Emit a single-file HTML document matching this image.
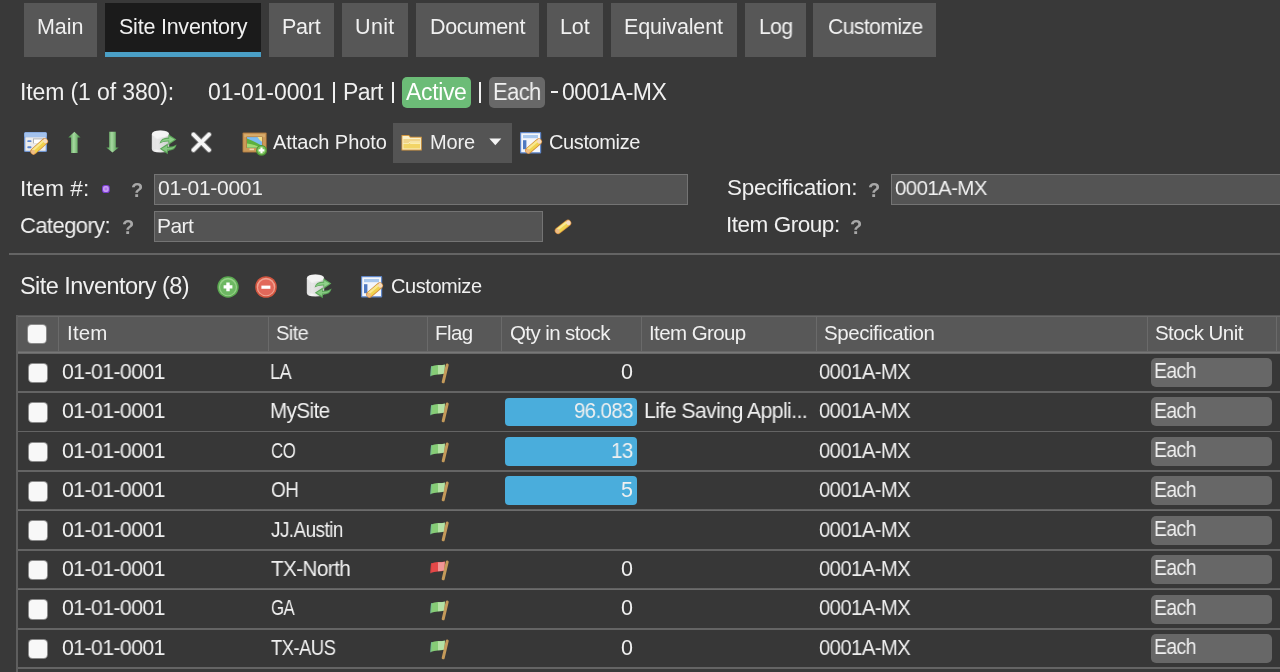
<!DOCTYPE html>
<html><head><meta charset="utf-8"><style>
html,body{margin:0;padding:0;width:1280px;height:672px;overflow:hidden;background:#393939;}
body{position:relative;font-family:"Liberation Sans",sans-serif;}
body>div,body>span,body>svg{position:absolute;}
.t{white-space:pre;line-height:1;display:block;will-change:transform;}
.b{display:inline-block;width:0;height:0;}
</style></head><body>
<div style="left:24.00px;top:3.00px;width:73.00px;height:54.00px;background:#575757"></div>
<span class="t" id="t0" style="left:37.09px;top:17.07px;font-size:21.5px;letter-spacing:-0.080px;color:#f0f0f0;">Main<i class="b"></i></span>
<div style="left:105.00px;top:3.00px;width:156.00px;height:54.00px;background:#1b1b1b"></div>
<div style="left:105.00px;top:52.00px;width:156.00px;height:5.00px;background:#4a9fc6"></div>
<span class="t" id="t1" style="left:118.52px;top:17.07px;font-size:21.5px;letter-spacing:-0.226px;color:#f0f0f0;">Site Inventory<i class="b"></i></span>
<div style="left:268.75px;top:3.00px;width:65.45px;height:54.00px;background:#575757"></div>
<span class="t" id="t2" style="left:281.64px;top:17.07px;font-size:21.5px;letter-spacing:-0.237px;color:#f0f0f0;">Part<i class="b"></i></span>
<div style="left:341.60px;top:3.00px;width:66.80px;height:54.00px;background:#575757"></div>
<span class="t" id="t3" style="left:355.24px;top:17.07px;font-size:21.5px;letter-spacing:0.361px;color:#f0f0f0;">Unit<i class="b"></i></span>
<div style="left:416.25px;top:3.00px;width:122.85px;height:54.00px;background:#575757"></div>
<span class="t" id="t4" style="left:429.74px;top:17.07px;font-size:21.5px;letter-spacing:-0.367px;color:#f0f0f0;">Document<i class="b"></i></span>
<div style="left:547.20px;top:3.00px;width:55.80px;height:54.00px;background:#575757"></div>
<span class="t" id="t5" style="left:559.84px;top:17.07px;font-size:21.5px;letter-spacing:-0.083px;color:#f0f0f0;">Lot<i class="b"></i></span>
<div style="left:611.00px;top:3.00px;width:126.10px;height:54.00px;background:#575757"></div>
<span class="t" id="t6" style="left:624.24px;top:17.07px;font-size:21.5px;letter-spacing:-0.165px;color:#f0f0f0;">Equivalent<i class="b"></i></span>
<div style="left:744.70px;top:3.00px;width:60.90px;height:54.00px;background:#575757"></div>
<span class="t" id="t7" style="left:758.57px;top:17.07px;font-size:21.5px;letter-spacing:-0.600px;color:#f0f0f0;transform:scaleX(0.9834);transform-origin:0 0;">Log<i class="b"></i></span>
<div style="left:812.70px;top:3.00px;width:123.30px;height:54.00px;background:#575757"></div>
<span class="t" id="t8" style="left:827.68px;top:17.07px;font-size:21.5px;letter-spacing:-0.600px;color:#f0f0f0;transform:scaleX(0.9840);transform-origin:0 0;">Customize<i class="b"></i></span>
<span class="t" id="t9" style="left:20.48px;top:80.60px;font-size:23px;letter-spacing:-0.116px;color:#f0f0f0;">Item (1 of 380):<i class="b"></i></span>
<span class="t" id="t10" style="left:207.70px;top:80.60px;font-size:23px;letter-spacing:-0.092px;color:#f0f0f0;">01-01-0001<i class="b"></i></span>
<div style="left:332.80px;top:81.50px;width:2.40px;height:21.00px;background:#f0f0f0"></div>
<span class="t" id="t11" style="left:342.61px;top:80.60px;font-size:23px;letter-spacing:-0.600px;color:#f0f0f0;">Part<i class="b"></i></span>
<div style="left:391.90px;top:81.50px;width:2.40px;height:21.00px;background:#f0f0f0"></div>
<div style="left:401.70px;top:77.00px;width:69.60px;height:30.60px;background:#6cbc77;border-radius:5px"></div>
<span class="t" id="t12" style="left:406.16px;top:80.81px;font-size:23px;letter-spacing:-0.353px;color:#ffffff;">Active<i class="b"></i></span>
<div style="left:479.00px;top:81.50px;width:2.40px;height:21.00px;background:#f0f0f0"></div>
<div style="left:489.00px;top:77.00px;width:56.00px;height:30.60px;background:#686868;border-radius:5px"></div>
<span class="t" id="t13" style="left:493.10px;top:80.81px;font-size:23px;letter-spacing:-0.600px;color:#f0f0f0;transform:scaleX(0.9546);transform-origin:0 0;">Each<i class="b"></i></span>
<div style="left:550.90px;top:91.00px;width:7.00px;height:2.20px;background:#f0f0f0"></div>
<span class="t" id="t14" style="left:562.10px;top:80.60px;font-size:23px;letter-spacing:-0.555px;color:#f0f0f0;">0001A-MX<i class="b"></i></span>
<div style="left:393.00px;top:123.00px;width:119.00px;height:40.00px;background:#545454"></div>
<span class="t" id="t15" style="left:272.96px;top:131.76px;font-size:20px;letter-spacing:-0.058px;color:#f0f0f0;">Attach Photo<i class="b"></i></span>
<svg style="left:23px;top:130px;" width="27" height="27" viewBox="0 0 27 27"><rect x="1" y="2" width="23" height="20" rx="1.5" fill="#6f95d2"/><rect x="1.5" y="2.5" width="22" height="4.5" rx="1" fill="#a4c2ec"/><rect x="2.3" y="7.2" width="20.4" height="13.6" fill="#ececec"/><rect x="4.3" y="10.2" width="4.2" height="1.9" rx="0.9" fill="#5b84cf"/><rect x="4.3" y="16.3" width="4.2" height="1.9" rx="0.9" fill="#5b84cf"/><rect x="10" y="8.4" width="12.5" height="5" fill="#b4b4b4"/><rect x="11" y="9.4" width="11.5" height="4" fill="#ffffff"/><g transform="translate(8.20,23.60) rotate(-41.99)"><rect x="0" y="-3.30" width="21.53" height="6.60" rx="3.30" fill="#d28c3c"/><rect x="2.97" y="-2.50" width="14.60" height="5.00" fill="#f0d24e"/><rect x="2.97" y="-2.40" width="14.60" height="2.10" fill="#f8e890"/><ellipse cx="2.51" cy="0" rx="1.98" ry="2.31" fill="#eebc84"/><ellipse cx="18.89" cy="0" rx="2.11" ry="2.47" fill="#f6dcc0"/></g></svg>
<svg style="left:68.4px;top:131.2px;" width="14" height="23" viewBox="0 0 14 23"><defs><linearGradient id="ga" x1="0" x2="1"><stop offset="0" stop-color="#3f8f3f"/><stop offset="0.45" stop-color="#a6d8a0"/><stop offset="1" stop-color="#3f8f3f"/></linearGradient></defs><polygon points="6.4,0.8 12.6,6.4 9.6,6.4 9.6,22 3.1,22 3.1,6.4 0.2,6.4" fill="url(#ga)"/></svg>
<svg style="left:105.5px;top:131.3px;" width="14" height="23" viewBox="0 0 14 23"><defs><linearGradient id="gd" x1="0" x2="1"><stop offset="0" stop-color="#3f8f3f"/><stop offset="0.45" stop-color="#a6d8a0"/><stop offset="1" stop-color="#3f8f3f"/></linearGradient></defs><polygon points="3.2,0.7 9.8,0.7 9.8,16.6 12.8,16.6 6.5,21.6 0.2,16.6 3.2,16.6" fill="url(#gd)"/></svg>
<svg style="left:151.2px;top:129.6px;" width="27" height="26" viewBox="0 0 27 26"><defs><linearGradient id="gc" x1="0" x2="1"><stop offset="0" stop-color="#dcdcdc"/><stop offset="0.3" stop-color="#f6f6f6"/><stop offset="1" stop-color="#c8c8c8"/></linearGradient></defs><path d="M0.8,4.5 Q0.8,0.6 9.5,0.6 Q18.2,0.6 18.2,4.5 L18.2,19 Q18.2,22.5 9.5,22.5 Q0.8,22.5 0.8,19 Z" fill="url(#gc)"/><ellipse cx="9.5" cy="4.2" rx="8.4" ry="3.4" fill="#f4f4f4"/><path d="M3.5,8 Q9.5,10 15.5,8 L15.5,19 Q9.5,21 3.5,19 Z" fill="#d8d8d8" opacity="0.5"/><path d="M8.6,13.6 Q9.6,7.6 17.4,7.6 L17.4,4.2 L25.4,9.6 L17.4,15 L17.4,11.6 Q12,11.4 8.6,13.6 Z" fill="#5fa85c"/><path d="M9.8,12.2 Q11.5,8.8 18.2,8.8 L18.2,6.4 L23.6,9.6 L18.2,13 L18.2,10.6 Q13,10.4 9.8,12.2 Z" fill="#8fd08a"/><path d="M25.6,14.6 Q24.6,20.8 16.8,20.8 L16.8,24.2 L8.8,18.8 L16.8,13.4 L16.8,16.8 Q22.2,17 25.6,14.6 Z" fill="#5aa457"/><path d="M24.2,16.2 Q22.8,19.6 16,19.6 L16,22 L10.6,18.8 L16,15.6 L16,18 Q21,18.2 24.2,16.2 Z" fill="#86c881"/></svg>
<svg style="left:190.7px;top:132.3px;" width="21" height="21" viewBox="0 0 21 21"><path d="M2.5,2.5 L18,18 M18,2.5 L2.5,18" stroke="#f6f6f6" stroke-width="5.4" stroke-linecap="round" opacity="0.35"/><path d="M2.5,2.5 L18,18 M18,2.5 L2.5,18" stroke="#f6f6f6" stroke-width="3.8" stroke-linecap="round"/></svg>
<svg style="left:241.5px;top:131.5px;" width="26" height="25" viewBox="0 0 26 25"><rect x="0.5" y="0.5" width="24.2" height="20" rx="1" fill="#a8743c"/><rect x="1.3" y="1.3" width="22.6" height="18.4" fill="#cc9a58"/><rect x="2.2" y="2.2" width="20.8" height="3" fill="#d8ac6c"/><rect x="4.5" y="4.6" width="16" height="11.4" fill="#9a6a36"/><rect x="5" y="5.1" width="15" height="10.4" fill="#7cbcf2"/><path d="M15.5,5.1 L20,5.1 L20,9.8 Q17.5,8.6 15.5,5.1 Z" fill="#f2e08a"/><path d="M5,6.6 Q11,8.8 20,13.8 L20,15.5 L5,15.5 Z" fill="#5cb040"/><path d="M5,11.5 Q12,12.5 20,15.5 L5,15.5 Z" fill="#a2da72"/><rect x="7.5" y="16.6" width="4.5" height="1.6" fill="#ecd8b0"/><circle cx="19.5" cy="18.4" r="5.4" fill="#4c9436"/><circle cx="19.5" cy="18.2" r="4.3" fill="#7cc45c"/><path d="M19.5,15.5 V21.3 M16.6,18.4 H22.4" stroke="#ffffff" stroke-width="2.1"/></svg>
<svg style="left:400.5px;top:134px;" width="22" height="17" viewBox="0 0 22 17"><path d="M0.5,1 L8,1 L9.5,2.8 L20.8,2.8 L20.8,16.4 L0.5,16.4 Z" fill="#d89a40"/><path d="M1.4,1.9 L7.6,1.9 L9.1,3.7 L19.9,3.7 L19.9,15.5 L1.4,15.5 Z" fill="#faf0c8"/><path d="M2.4,5 L19,5 L19,7.6 L9,7.6 L7.4,9 L2.4,9 Z" fill="#f0d48a"/><path d="M2.4,9.8 L7.8,9.8 L9.4,8.4 L19,8.4 L19,14.6 L2.4,14.6 Z" fill="#f2d466"/><path d="M9.4,8.4 L19,8.4 L19,10 L9,10 Z" fill="#faecb0"/></svg>
<svg style="left:488.7px;top:138.3px;" width="13" height="8" viewBox="0 0 13 8"><polygon points="0.3,0.5 12.3,0.5 6.3,7.2" fill="#f4f4f4"/></svg>
<svg style="left:519.2px;top:131.2px;" width="25" height="25" viewBox="0 0 25 25"><rect x="1" y="1" width="21.2" height="21.4" rx="1" fill="#5f86c8"/><rect x="2.2" y="2.2" width="18.8" height="19" fill="#f4f6fa"/><rect x="4" y="4" width="15" height="3.2" fill="#a9c8ee"/><rect x="4" y="9.2" width="3.4" height="9" fill="#4f79c2"/><g transform="translate(7.00,21.60) rotate(-40.54)"><rect x="0" y="-3.30" width="20.00" height="6.60" rx="3.30" fill="#d28c3c"/><rect x="2.97" y="-2.50" width="13.07" height="5.00" fill="#f0d24e"/><rect x="2.97" y="-2.40" width="13.07" height="2.10" fill="#f8e890"/><ellipse cx="2.51" cy="0" rx="1.98" ry="2.31" fill="#eebc84"/><ellipse cx="17.36" cy="0" rx="2.11" ry="2.47" fill="#f6dcc0"/></g></svg>
<span class="t" id="t16" style="left:429.76px;top:132.01px;font-size:20px;letter-spacing:-0.146px;color:#f0f0f0;">More<i class="b"></i></span>
<span class="t" id="t17" style="left:548.98px;top:132.01px;font-size:20px;letter-spacing:-0.384px;color:#f0f0f0;">Customize<i class="b"></i></span>
<span class="t" id="t18" style="left:20.17px;top:177.50px;font-size:22.5px;letter-spacing:0.059px;color:#f0f0f0;">Item #:<i class="b"></i></span>
<span class="t" id="t19" style="left:20.38px;top:215.00px;font-size:22.5px;letter-spacing:-0.600px;color:#f0f0f0;transform:scaleX(0.9771);transform-origin:0 0;">Category:<i class="b"></i></span>
<span class="t" id="t20" style="left:726.68px;top:177.22px;font-size:22.5px;letter-spacing:-0.250px;color:#f0f0f0;">Specification:<i class="b"></i></span>
<span class="t" id="t21" style="left:725.92px;top:213.82px;font-size:22.5px;letter-spacing:-0.466px;color:#f0f0f0;">Item Group:<i class="b"></i></span>
<div style="left:154.00px;top:174.00px;width:534.00px;height:31.40px;background:#545454;border:1px solid #747474;box-sizing:border-box"></div>
<div style="left:154.00px;top:211.30px;width:388.60px;height:31.20px;background:#545454;border:1px solid #747474;box-sizing:border-box"></div>
<div style="left:891.00px;top:174.20px;width:400.00px;height:31.00px;background:#545454;border:1px solid #747474;box-sizing:border-box"></div>
<span class="t" id="t22" style="left:157.98px;top:177.40px;font-size:21px;letter-spacing:-0.286px;color:#f0f0f0;">01-01-0001<i class="b"></i></span>
<span class="t" id="t23" style="left:157.08px;top:214.60px;font-size:21px;letter-spacing:-0.600px;color:#f0f0f0;transform:scaleX(0.9989);transform-origin:0 0;">Part<i class="b"></i></span>
<span class="t" id="t24" style="left:894.90px;top:177.20px;font-size:21px;letter-spacing:-0.600px;color:#f0f0f0;transform:scaleX(0.9727);transform-origin:0 0;">0001A-MX<i class="b"></i></span>
<div style="left:8.75px;top:252.50px;width:1272.00px;height:2.00px;background:#646464"></div>
<svg style="left:101px;top:184px;" width="10" height="10" viewBox="0 0 10 10"><rect x="1" y="1" width="7.8" height="8" rx="2.8" fill="#7a3ed0"/><rect x="2" y="2" width="5.8" height="6" rx="2" fill="#c79af5"/><circle cx="4.9" cy="5" r="1.4" fill="#b07ae8"/></svg>
<span class="t" id="t25" style="left:131.08px;top:179.81px;font-size:20px;letter-spacing:0.000px;color:#a8a8a8;font-weight:bold;filter:blur(0.5px);">?<i class="b"></i></span>
<span class="t" id="t26" style="left:122.18px;top:216.91px;font-size:20px;letter-spacing:0.000px;color:#a8a8a8;font-weight:bold;filter:blur(0.5px);">?<i class="b"></i></span>
<span class="t" id="t27" style="left:867.98px;top:179.81px;font-size:20px;letter-spacing:0.000px;color:#a8a8a8;font-weight:bold;filter:blur(0.5px);">?<i class="b"></i></span>
<span class="t" id="t28" style="left:850.18px;top:216.61px;font-size:20px;letter-spacing:0.000px;color:#a8a8a8;font-weight:bold;filter:blur(0.5px);">?<i class="b"></i></span>
<svg style="left:551px;top:217px;" width="24" height="21" viewBox="0 0 24 21"><g transform="translate(4.50,15.80) rotate(-38.19)"><rect x="0" y="-3.40" width="19.09" height="6.80" rx="3.40" fill="#d28c3c"/><rect x="3.06" y="-2.60" width="11.95" height="5.20" fill="#f0d24e"/><rect x="3.06" y="-2.50" width="11.95" height="2.18" fill="#f8e890"/><ellipse cx="2.58" cy="0" rx="2.04" ry="2.38" fill="#eebc84"/><ellipse cx="16.37" cy="0" rx="2.18" ry="2.55" fill="#f6dcc0"/></g></svg>
<span class="t" id="t29" style="left:20.43px;top:274.91px;font-size:23.5px;letter-spacing:-0.554px;color:#f0f0f0;">Site Inventory (8)<i class="b"></i></span>
<span class="t" id="t30" style="left:390.58px;top:275.51px;font-size:20px;letter-spacing:-0.434px;color:#f0f0f0;">Customize<i class="b"></i></span>
<svg style="left:216.8px;top:276px;" width="22" height="22" viewBox="0 0 22 22"><circle cx="11" cy="11" r="10.7" fill="#5aa850"/><circle cx="11" cy="11" r="9.2" fill="#94cf86"/><circle cx="11" cy="11.4" r="7.8" fill="#6db862"/><path d="M11,6.5 V15.3 M6.6,10.9 H15.4" stroke="#ffffff" stroke-width="3.4"/></svg>
<svg style="left:255.4px;top:276px;" width="22" height="22" viewBox="0 0 22 22"><circle cx="11" cy="11" r="10.8" fill="#d2553f"/><circle cx="11" cy="11" r="9.3" fill="#f0a190"/><circle cx="11" cy="11.4" r="7.9" fill="#e2685a"/><path d="M6.4,11.2 H15.4" stroke="#ffffff" stroke-width="3.2"/></svg>
<svg style="left:305.9px;top:274.3px;" width="27" height="26" viewBox="0 0 27 26"><defs><linearGradient id="gc" x1="0" x2="1"><stop offset="0" stop-color="#dcdcdc"/><stop offset="0.3" stop-color="#f6f6f6"/><stop offset="1" stop-color="#c8c8c8"/></linearGradient></defs><path d="M0.8,4.5 Q0.8,0.6 9.5,0.6 Q18.2,0.6 18.2,4.5 L18.2,19 Q18.2,22.5 9.5,22.5 Q0.8,22.5 0.8,19 Z" fill="url(#gc)"/><ellipse cx="9.5" cy="4.2" rx="8.4" ry="3.4" fill="#f4f4f4"/><path d="M3.5,8 Q9.5,10 15.5,8 L15.5,19 Q9.5,21 3.5,19 Z" fill="#d8d8d8" opacity="0.5"/><path d="M8.6,13.6 Q9.6,7.6 17.4,7.6 L17.4,4.2 L25.4,9.6 L17.4,15 L17.4,11.6 Q12,11.4 8.6,13.6 Z" fill="#5fa85c"/><path d="M9.8,12.2 Q11.5,8.8 18.2,8.8 L18.2,6.4 L23.6,9.6 L18.2,13 L18.2,10.6 Q13,10.4 9.8,12.2 Z" fill="#8fd08a"/><path d="M25.6,14.6 Q24.6,20.8 16.8,20.8 L16.8,24.2 L8.8,18.8 L16.8,13.4 L16.8,16.8 Q22.2,17 25.6,14.6 Z" fill="#5aa457"/><path d="M24.2,16.2 Q22.8,19.6 16,19.6 L16,22 L10.6,18.8 L16,15.6 L16,18 Q21,18.2 24.2,16.2 Z" fill="#86c881"/></svg>
<svg style="left:359.8px;top:275.3px;" width="25" height="25" viewBox="0 0 25 25"><rect x="1" y="1" width="21.2" height="21.4" rx="1" fill="#5f86c8"/><rect x="2.2" y="2.2" width="18.8" height="19" fill="#f4f6fa"/><rect x="4" y="4" width="15" height="3.2" fill="#a9c8ee"/><rect x="4" y="9.2" width="3.4" height="9" fill="#4f79c2"/><g transform="translate(7.00,21.60) rotate(-40.54)"><rect x="0" y="-3.30" width="20.00" height="6.60" rx="3.30" fill="#d28c3c"/><rect x="2.97" y="-2.50" width="13.07" height="5.00" fill="#f0d24e"/><rect x="2.97" y="-2.40" width="13.07" height="2.10" fill="#f8e890"/><ellipse cx="2.51" cy="0" rx="1.98" ry="2.31" fill="#eebc84"/><ellipse cx="17.36" cy="0" rx="2.11" ry="2.47" fill="#f6dcc0"/></g></svg>
<div style="left:16.00px;top:315.00px;width:1300.00px;height:39.00px;background:#585858"></div>
<div style="left:16.00px;top:315.50px;width:1300.00px;height:1.60px;background:#6a6a6a"></div>
<div style="left:16.00px;top:350.80px;width:1300.00px;height:3.20px;background:linear-gradient(#606060,#787878 50%,#606060)"></div>
<div style="left:16.00px;top:315.00px;width:2.00px;height:400.00px;background:#5e5e5e"></div>
<div style="left:58.20px;top:317.00px;width:1.30px;height:33.70px;background:#6a6a6a"></div>
<div style="left:267.50px;top:317.00px;width:1.30px;height:33.70px;background:#6a6a6a"></div>
<div style="left:426.50px;top:317.00px;width:1.30px;height:33.70px;background:#6a6a6a"></div>
<div style="left:500.80px;top:317.00px;width:1.30px;height:33.70px;background:#6a6a6a"></div>
<div style="left:640.60px;top:317.00px;width:1.30px;height:33.70px;background:#6a6a6a"></div>
<div style="left:815.50px;top:317.00px;width:1.30px;height:33.70px;background:#6a6a6a"></div>
<div style="left:1146.80px;top:317.00px;width:1.30px;height:33.70px;background:#6a6a6a"></div>
<div style="left:1275.60px;top:317.00px;width:1.30px;height:33.70px;background:#6a6a6a"></div>
<span class="t" id="t31" style="left:67.31px;top:323.01px;font-size:20.5px;letter-spacing:0.191px;color:#f0f0f0;">Item<i class="b"></i></span>
<span class="t" id="t32" style="left:276.34px;top:323.01px;font-size:20.5px;letter-spacing:-0.600px;color:#f0f0f0;transform:scaleX(0.9816);transform-origin:0 0;">Site<i class="b"></i></span>
<span class="t" id="t33" style="left:434.57px;top:323.01px;font-size:20.5px;letter-spacing:-0.542px;color:#f0f0f0;">Flag<i class="b"></i></span>
<span class="t" id="t34" style="left:509.63px;top:323.01px;font-size:20.5px;letter-spacing:-0.600px;color:#f0f0f0;transform:scaleX(0.9955);transform-origin:0 0;">Qty in stock<i class="b"></i></span>
<span class="t" id="t35" style="left:649.41px;top:323.01px;font-size:20.5px;letter-spacing:-0.587px;color:#f0f0f0;">Item Group<i class="b"></i></span>
<span class="t" id="t36" style="left:824.47px;top:323.01px;font-size:20.5px;letter-spacing:-0.439px;color:#f0f0f0;">Specification<i class="b"></i></span>
<span class="t" id="t37" style="left:1155.07px;top:323.01px;font-size:20.5px;letter-spacing:-0.560px;color:#f0f0f0;">Stock Unit<i class="b"></i></span>
<div style="left:28.00px;top:324.70px;width:18.20px;height:18.20px;background:#f8f8f8;border-radius:3.5px;box-shadow:0 0 0 1px #8a8a8a;filter:blur(0.45px)"></div>
<div style="left:18.00px;top:353.50px;width:1262.00px;height:37.60px;background:#373737"></div>
<div style="left:18.00px;top:391.10px;width:1262.00px;height:2.20px;background:linear-gradient(#5c5c5c,#6c6c6c 50%,#5c5c5c)"></div>
<div style="left:28.60px;top:363.60px;width:18.60px;height:18.60px;background:#f8f8f8;border-radius:3.5px;box-shadow:0 0 0 1px #8a8a8a;filter:blur(0.45px)"></div>
<span class="t" id="t38" style="left:62.07px;top:361.70px;font-size:21.5px;letter-spacing:-0.600px;color:#f0f0f0;transform:scaleX(0.9894);transform-origin:0 0;">01-01-0001<i class="b"></i></span>
<svg style="left:429.8px;top:362.8px;" width="20" height="21" viewBox="0 0 20 21"><path d="M1,3.6 Q5,1.9 8.5,2.1 Q11.5,2.2 15,1.6 L14.4,10.8 Q11,11.6 8,11.6 Q4,12 0.4,13 Z" fill="#86cc76"/><path d="M8,2.3 Q11.5,2.3 14.8,1.7 L14.3,10.6 Q11,11.2 8,11.3 Z" fill="#c4e8b6" opacity="0.75"/><path d="M1,3 L0.2,13.5 L1.3,13.2 L2,3 Z" fill="#6ab8a8" opacity="0.6"/><path d="M17.2,2 L13.2,18.8" stroke="#c49a5a" stroke-width="3" stroke-linecap="round"/></svg>
<span class="t" id="t39" style="left:270.20px;top:361.70px;font-size:21.5px;letter-spacing:-0.600px;color:#f0f0f0;transform:scaleX(0.8497);transform-origin:0 0;">LA<i class="b"></i></span>
<span class="t" id="t40" style="left:620.98px;top:361.70px;font-size:21.5px;letter-spacing:0.000px;color:#f0f0f0;">0<i class="b"></i></span>
<span class="t" id="t41" style="left:819.01px;top:361.70px;font-size:21.5px;letter-spacing:-0.600px;color:#f0f0f0;transform:scaleX(0.9418);transform-origin:0 0;">0001A-MX<i class="b"></i></span>
<div style="left:1150.50px;top:358.00px;width:121.90px;height:29.00px;background:#676767;border-radius:5px"></div>
<span class="t" id="t42" style="left:1154.21px;top:361.20px;font-size:21.5px;letter-spacing:-0.600px;color:#f0f0f0;transform:scaleX(0.8991);transform-origin:0 0;">Each<i class="b"></i></span>
<div style="left:18.00px;top:392.95px;width:1262.00px;height:37.60px;background:#373737"></div>
<div style="left:18.00px;top:430.55px;width:1262.00px;height:2.20px;background:linear-gradient(#5c5c5c,#6c6c6c 50%,#5c5c5c)"></div>
<div style="left:28.60px;top:403.05px;width:18.60px;height:18.60px;background:#f8f8f8;border-radius:3.5px;box-shadow:0 0 0 1px #8a8a8a;filter:blur(0.45px)"></div>
<span class="t" id="t43" style="left:62.07px;top:401.15px;font-size:21.5px;letter-spacing:-0.600px;color:#f0f0f0;transform:scaleX(0.9894);transform-origin:0 0;">01-01-0001<i class="b"></i></span>
<svg style="left:429.8px;top:402.25px;" width="20" height="21" viewBox="0 0 20 21"><path d="M1,3.6 Q5,1.9 8.5,2.1 Q11.5,2.2 15,1.6 L14.4,10.8 Q11,11.6 8,11.6 Q4,12 0.4,13 Z" fill="#86cc76"/><path d="M8,2.3 Q11.5,2.3 14.8,1.7 L14.3,10.6 Q11,11.2 8,11.3 Z" fill="#c4e8b6" opacity="0.75"/><path d="M1,3 L0.2,13.5 L1.3,13.2 L2,3 Z" fill="#6ab8a8" opacity="0.6"/><path d="M17.2,2 L13.2,18.8" stroke="#c49a5a" stroke-width="3" stroke-linecap="round"/></svg>
<span class="t" id="t44" style="left:270.01px;top:401.15px;font-size:21.5px;letter-spacing:-0.600px;color:#f0f0f0;transform:scaleX(0.9585);transform-origin:0 0;">MySite<i class="b"></i></span>
<div style="left:504.60px;top:397.50px;width:132.80px;height:28.70px;background:#4aaddc;border-radius:4px"></div>
<span class="t" id="t45" style="left:573.55px;top:401.15px;font-size:21.5px;letter-spacing:-0.600px;color:#f0f0f0;transform:scaleX(0.9473);transform-origin:0 0;">96.083<i class="b"></i></span>
<span class="t" id="t46" style="left:643.66px;top:401.15px;font-size:21.5px;letter-spacing:-0.600px;color:#f0f0f0;transform:scaleX(0.9893);transform-origin:0 0;">Life Saving Appli...<i class="b"></i></span>
<span class="t" id="t47" style="left:819.01px;top:401.15px;font-size:21.5px;letter-spacing:-0.600px;color:#f0f0f0;transform:scaleX(0.9418);transform-origin:0 0;">0001A-MX<i class="b"></i></span>
<div style="left:1150.50px;top:397.45px;width:121.90px;height:29.00px;background:#676767;border-radius:5px"></div>
<span class="t" id="t48" style="left:1154.21px;top:400.65px;font-size:21.5px;letter-spacing:-0.600px;color:#f0f0f0;transform:scaleX(0.8991);transform-origin:0 0;">Each<i class="b"></i></span>
<div style="left:18.00px;top:432.40px;width:1262.00px;height:37.60px;background:#373737"></div>
<div style="left:18.00px;top:470.00px;width:1262.00px;height:2.20px;background:linear-gradient(#5c5c5c,#6c6c6c 50%,#5c5c5c)"></div>
<div style="left:28.60px;top:442.50px;width:18.60px;height:18.60px;background:#f8f8f8;border-radius:3.5px;box-shadow:0 0 0 1px #8a8a8a;filter:blur(0.45px)"></div>
<span class="t" id="t49" style="left:62.07px;top:440.60px;font-size:21.5px;letter-spacing:-0.600px;color:#f0f0f0;transform:scaleX(0.9894);transform-origin:0 0;">01-01-0001<i class="b"></i></span>
<svg style="left:429.8px;top:441.70000000000005px;" width="20" height="21" viewBox="0 0 20 21"><path d="M1,3.6 Q5,1.9 8.5,2.1 Q11.5,2.2 15,1.6 L14.4,10.8 Q11,11.6 8,11.6 Q4,12 0.4,13 Z" fill="#86cc76"/><path d="M8,2.3 Q11.5,2.3 14.8,1.7 L14.3,10.6 Q11,11.2 8,11.3 Z" fill="#c4e8b6" opacity="0.75"/><path d="M1,3 L0.2,13.5 L1.3,13.2 L2,3 Z" fill="#6ab8a8" opacity="0.6"/><path d="M17.2,2 L13.2,18.8" stroke="#c49a5a" stroke-width="3" stroke-linecap="round"/></svg>
<span class="t" id="t50" style="left:270.85px;top:440.60px;font-size:21.5px;letter-spacing:-0.600px;color:#f0f0f0;transform:scaleX(0.7823);transform-origin:0 0;">CO<i class="b"></i></span>
<div style="left:504.60px;top:436.95px;width:132.80px;height:28.70px;background:#4aaddc;border-radius:4px"></div>
<span class="t" id="t51" style="left:610.63px;top:440.60px;font-size:21.5px;letter-spacing:-0.600px;color:#f0f0f0;transform:scaleX(0.9599);transform-origin:0 0;">13<i class="b"></i></span>
<span class="t" id="t52" style="left:819.01px;top:440.60px;font-size:21.5px;letter-spacing:-0.600px;color:#f0f0f0;transform:scaleX(0.9418);transform-origin:0 0;">0001A-MX<i class="b"></i></span>
<div style="left:1150.50px;top:436.90px;width:121.90px;height:29.00px;background:#676767;border-radius:5px"></div>
<span class="t" id="t53" style="left:1154.21px;top:440.10px;font-size:21.5px;letter-spacing:-0.600px;color:#f0f0f0;transform:scaleX(0.8991);transform-origin:0 0;">Each<i class="b"></i></span>
<div style="left:18.00px;top:471.85px;width:1262.00px;height:37.60px;background:#373737"></div>
<div style="left:18.00px;top:509.45px;width:1262.00px;height:2.20px;background:linear-gradient(#5c5c5c,#6c6c6c 50%,#5c5c5c)"></div>
<div style="left:28.60px;top:481.95px;width:18.60px;height:18.60px;background:#f8f8f8;border-radius:3.5px;box-shadow:0 0 0 1px #8a8a8a;filter:blur(0.45px)"></div>
<span class="t" id="t54" style="left:62.07px;top:480.07px;font-size:21.5px;letter-spacing:-0.600px;color:#f0f0f0;transform:scaleX(0.9894);transform-origin:0 0;">01-01-0001<i class="b"></i></span>
<svg style="left:429.8px;top:481.15000000000003px;" width="20" height="21" viewBox="0 0 20 21"><path d="M1,3.6 Q5,1.9 8.5,2.1 Q11.5,2.2 15,1.6 L14.4,10.8 Q11,11.6 8,11.6 Q4,12 0.4,13 Z" fill="#86cc76"/><path d="M8,2.3 Q11.5,2.3 14.8,1.7 L14.3,10.6 Q11,11.2 8,11.3 Z" fill="#c4e8b6" opacity="0.75"/><path d="M1,3 L0.2,13.5 L1.3,13.2 L2,3 Z" fill="#6ab8a8" opacity="0.6"/><path d="M17.2,2 L13.2,18.8" stroke="#c49a5a" stroke-width="3" stroke-linecap="round"/></svg>
<span class="t" id="t55" style="left:270.80px;top:480.07px;font-size:21.5px;letter-spacing:-0.600px;color:#f0f0f0;transform:scaleX(0.8830);transform-origin:0 0;">OH<i class="b"></i></span>
<div style="left:504.60px;top:476.40px;width:132.80px;height:28.70px;background:#4aaddc;border-radius:4px"></div>
<span class="t" id="t56" style="left:621.05px;top:480.07px;font-size:21.5px;letter-spacing:0.000px;color:#f0f0f0;">5<i class="b"></i></span>
<span class="t" id="t57" style="left:819.01px;top:480.07px;font-size:21.5px;letter-spacing:-0.600px;color:#f0f0f0;transform:scaleX(0.9418);transform-origin:0 0;">0001A-MX<i class="b"></i></span>
<div style="left:1150.50px;top:476.35px;width:121.90px;height:29.00px;background:#676767;border-radius:5px"></div>
<span class="t" id="t58" style="left:1154.21px;top:479.57px;font-size:21.5px;letter-spacing:-0.600px;color:#f0f0f0;transform:scaleX(0.8991);transform-origin:0 0;">Each<i class="b"></i></span>
<div style="left:18.00px;top:511.30px;width:1262.00px;height:37.60px;background:#373737"></div>
<div style="left:18.00px;top:548.90px;width:1262.00px;height:2.20px;background:linear-gradient(#5c5c5c,#6c6c6c 50%,#5c5c5c)"></div>
<div style="left:28.60px;top:521.40px;width:18.60px;height:18.60px;background:#f8f8f8;border-radius:3.5px;box-shadow:0 0 0 1px #8a8a8a;filter:blur(0.45px)"></div>
<span class="t" id="t59" style="left:62.07px;top:519.50px;font-size:21.5px;letter-spacing:-0.600px;color:#f0f0f0;transform:scaleX(0.9894);transform-origin:0 0;">01-01-0001<i class="b"></i></span>
<svg style="left:429.8px;top:520.6px;" width="20" height="21" viewBox="0 0 20 21"><path d="M1,3.6 Q5,1.9 8.5,2.1 Q11.5,2.2 15,1.6 L14.4,10.8 Q11,11.6 8,11.6 Q4,12 0.4,13 Z" fill="#86cc76"/><path d="M8,2.3 Q11.5,2.3 14.8,1.7 L14.3,10.6 Q11,11.2 8,11.3 Z" fill="#c4e8b6" opacity="0.75"/><path d="M1,3 L0.2,13.5 L1.3,13.2 L2,3 Z" fill="#6ab8a8" opacity="0.6"/><path d="M17.2,2 L13.2,18.8" stroke="#c49a5a" stroke-width="3" stroke-linecap="round"/></svg>
<span class="t" id="t60" style="left:271.41px;top:519.50px;font-size:21.5px;letter-spacing:-0.600px;color:#f0f0f0;transform:scaleX(0.8774);transform-origin:0 0;">JJ.Austin<i class="b"></i></span>
<span class="t" id="t61" style="left:819.01px;top:519.50px;font-size:21.5px;letter-spacing:-0.600px;color:#f0f0f0;transform:scaleX(0.9418);transform-origin:0 0;">0001A-MX<i class="b"></i></span>
<div style="left:1150.50px;top:515.80px;width:121.90px;height:29.00px;background:#676767;border-radius:5px"></div>
<span class="t" id="t62" style="left:1154.21px;top:519.00px;font-size:21.5px;letter-spacing:-0.600px;color:#f0f0f0;transform:scaleX(0.8991);transform-origin:0 0;">Each<i class="b"></i></span>
<div style="left:18.00px;top:550.75px;width:1262.00px;height:37.60px;background:#373737"></div>
<div style="left:18.00px;top:588.35px;width:1262.00px;height:2.20px;background:linear-gradient(#5c5c5c,#6c6c6c 50%,#5c5c5c)"></div>
<div style="left:28.60px;top:560.85px;width:18.60px;height:18.60px;background:#f8f8f8;border-radius:3.5px;box-shadow:0 0 0 1px #8a8a8a;filter:blur(0.45px)"></div>
<span class="t" id="t63" style="left:62.07px;top:558.95px;font-size:21.5px;letter-spacing:-0.600px;color:#f0f0f0;transform:scaleX(0.9894);transform-origin:0 0;">01-01-0001<i class="b"></i></span>
<svg style="left:429.8px;top:560.05px;" width="20" height="21" viewBox="0 0 20 21"><path d="M1,3.6 Q5,1.9 8.5,2.1 Q11.5,2.2 15,1.6 L14.4,10.8 Q11,11.6 8,11.6 Q4,12 0.4,13 Z" fill="#e44848"/><path d="M8,2.3 Q11.5,2.3 14.8,1.7 L14.3,10.6 Q11,11.2 8,11.3 Z" fill="#f4b0b0" opacity="0.75"/><path d="M1,3 L0.2,13.5 L1.3,13.2 L2,3 Z" fill="#d04040" opacity="0.6"/><path d="M17.2,2 L13.2,18.8" stroke="#c49a5a" stroke-width="3" stroke-linecap="round"/></svg>
<span class="t" id="t64" style="left:271.24px;top:558.95px;font-size:21.5px;letter-spacing:-0.600px;color:#f0f0f0;transform:scaleX(0.9614);transform-origin:0 0;">TX-North<i class="b"></i></span>
<span class="t" id="t65" style="left:620.98px;top:558.95px;font-size:21.5px;letter-spacing:0.000px;color:#f0f0f0;">0<i class="b"></i></span>
<span class="t" id="t66" style="left:819.01px;top:558.95px;font-size:21.5px;letter-spacing:-0.600px;color:#f0f0f0;transform:scaleX(0.9418);transform-origin:0 0;">0001A-MX<i class="b"></i></span>
<div style="left:1150.50px;top:555.25px;width:121.90px;height:29.00px;background:#676767;border-radius:5px"></div>
<span class="t" id="t67" style="left:1154.21px;top:558.45px;font-size:21.5px;letter-spacing:-0.600px;color:#f0f0f0;transform:scaleX(0.8991);transform-origin:0 0;">Each<i class="b"></i></span>
<div style="left:18.00px;top:590.20px;width:1262.00px;height:37.60px;background:#373737"></div>
<div style="left:18.00px;top:627.80px;width:1262.00px;height:2.20px;background:linear-gradient(#5c5c5c,#6c6c6c 50%,#5c5c5c)"></div>
<div style="left:28.60px;top:600.30px;width:18.60px;height:18.60px;background:#f8f8f8;border-radius:3.5px;box-shadow:0 0 0 1px #8a8a8a;filter:blur(0.45px)"></div>
<span class="t" id="t68" style="left:62.07px;top:598.40px;font-size:21.5px;letter-spacing:-0.600px;color:#f0f0f0;transform:scaleX(0.9894);transform-origin:0 0;">01-01-0001<i class="b"></i></span>
<svg style="left:429.8px;top:599.5px;" width="20" height="21" viewBox="0 0 20 21"><path d="M1,3.6 Q5,1.9 8.5,2.1 Q11.5,2.2 15,1.6 L14.4,10.8 Q11,11.6 8,11.6 Q4,12 0.4,13 Z" fill="#86cc76"/><path d="M8,2.3 Q11.5,2.3 14.8,1.7 L14.3,10.6 Q11,11.2 8,11.3 Z" fill="#c4e8b6" opacity="0.75"/><path d="M1,3 L0.2,13.5 L1.3,13.2 L2,3 Z" fill="#6ab8a8" opacity="0.6"/><path d="M17.2,2 L13.2,18.8" stroke="#c49a5a" stroke-width="3" stroke-linecap="round"/></svg>
<span class="t" id="t69" style="left:270.86px;top:598.40px;font-size:21.5px;letter-spacing:-0.600px;color:#f0f0f0;transform:scaleX(0.7805);transform-origin:0 0;">GA<i class="b"></i></span>
<span class="t" id="t70" style="left:620.98px;top:598.40px;font-size:21.5px;letter-spacing:0.000px;color:#f0f0f0;">0<i class="b"></i></span>
<span class="t" id="t71" style="left:819.01px;top:598.40px;font-size:21.5px;letter-spacing:-0.600px;color:#f0f0f0;transform:scaleX(0.9418);transform-origin:0 0;">0001A-MX<i class="b"></i></span>
<div style="left:1150.50px;top:594.70px;width:121.90px;height:29.00px;background:#676767;border-radius:5px"></div>
<span class="t" id="t72" style="left:1154.21px;top:597.90px;font-size:21.5px;letter-spacing:-0.600px;color:#f0f0f0;transform:scaleX(0.8991);transform-origin:0 0;">Each<i class="b"></i></span>
<div style="left:18.00px;top:629.65px;width:1262.00px;height:37.60px;background:#373737"></div>
<div style="left:18.00px;top:667.25px;width:1262.00px;height:2.20px;background:linear-gradient(#5c5c5c,#6c6c6c 50%,#5c5c5c)"></div>
<div style="left:28.60px;top:639.75px;width:18.60px;height:18.60px;background:#f8f8f8;border-radius:3.5px;box-shadow:0 0 0 1px #8a8a8a;filter:blur(0.45px)"></div>
<span class="t" id="t73" style="left:62.07px;top:637.85px;font-size:21.5px;letter-spacing:-0.600px;color:#f0f0f0;transform:scaleX(0.9894);transform-origin:0 0;">01-01-0001<i class="b"></i></span>
<svg style="left:429.8px;top:638.95px;" width="20" height="21" viewBox="0 0 20 21"><path d="M1,3.6 Q5,1.9 8.5,2.1 Q11.5,2.2 15,1.6 L14.4,10.8 Q11,11.6 8,11.6 Q4,12 0.4,13 Z" fill="#86cc76"/><path d="M8,2.3 Q11.5,2.3 14.8,1.7 L14.3,10.6 Q11,11.2 8,11.3 Z" fill="#c4e8b6" opacity="0.75"/><path d="M1,3 L0.2,13.5 L1.3,13.2 L2,3 Z" fill="#6ab8a8" opacity="0.6"/><path d="M17.2,2 L13.2,18.8" stroke="#c49a5a" stroke-width="3" stroke-linecap="round"/></svg>
<span class="t" id="t74" style="left:271.29px;top:637.85px;font-size:21.5px;letter-spacing:-0.600px;color:#f0f0f0;transform:scaleX(0.8565);transform-origin:0 0;">TX-AUS<i class="b"></i></span>
<span class="t" id="t75" style="left:620.98px;top:637.85px;font-size:21.5px;letter-spacing:0.000px;color:#f0f0f0;">0<i class="b"></i></span>
<span class="t" id="t76" style="left:819.01px;top:637.85px;font-size:21.5px;letter-spacing:-0.600px;color:#f0f0f0;transform:scaleX(0.9418);transform-origin:0 0;">0001A-MX<i class="b"></i></span>
<div style="left:1150.50px;top:634.15px;width:121.90px;height:29.00px;background:#676767;border-radius:5px"></div>
<span class="t" id="t77" style="left:1154.21px;top:637.35px;font-size:21.5px;letter-spacing:-0.600px;color:#f0f0f0;transform:scaleX(0.8991);transform-origin:0 0;">Each<i class="b"></i></span>
</body></html>
